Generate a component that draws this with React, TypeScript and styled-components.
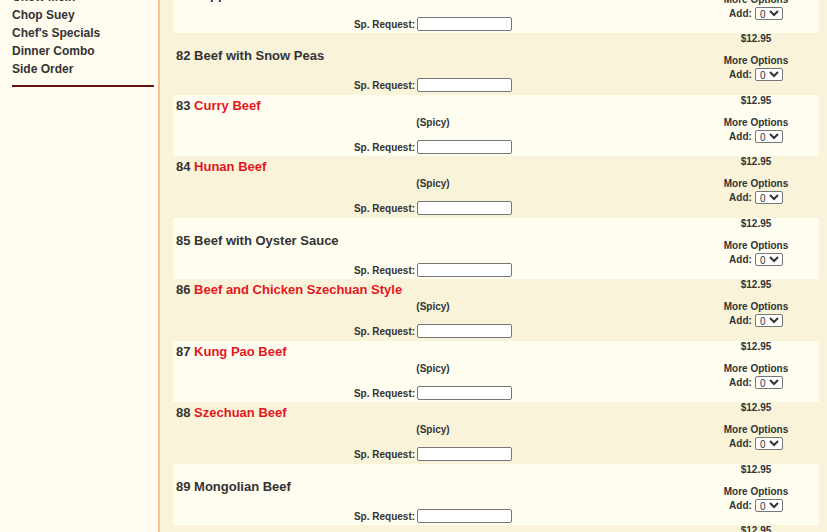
import styled, { createGlobalStyle } from "styled-components";

type Item = { no: number; name: string; spicy?: boolean; price: string };

const sideLinks = ["Chow Mein", "Chop Suey", "Chef's Specials", "Dinner Combo", "Side Order"];

const items: Item[] = [
  { no: 81, name: "Pepper Steak", price: "$12.95" },
  { no: 82, name: "Beef with Snow Peas", price: "$12.95" },
  { no: 83, name: "Curry Beef", spicy: true, price: "$12.95" },
  { no: 84, name: "Hunan Beef", spicy: true, price: "$12.95" },
  { no: 85, name: "Beef with Oyster Sauce", price: "$12.95" },
  { no: 86, name: "Beef and Chicken Szechuan Style", spicy: true, price: "$12.95" },
  { no: 87, name: "Kung Pao Beef", spicy: true, price: "$12.95" },
  { no: 88, name: "Szechuan Beef", spicy: true, price: "$12.95" },
  { no: 89, name: "Mongolian Beef", price: "$12.95" },
  { no: 90, name: "Beef with Broccoli", price: "$12.95" },
];

const GlobalStyle = createGlobalStyle`
  html, body {
    margin: 0;
    padding: 0;
    overflow: hidden;
    background: #f9f3da;
  }
  body {
    font-family: "Liberation Sans", Arial, sans-serif;
    color: #333;
  }
`;

export default function App() {
  return (
    <>
      <GlobalStyle />
      <Layout>
        <Sidebar>
          {sideLinks.map((l) => (
            <SideLink key={l}>{l}</SideLink>
          ))}
          <Separator />
        </Sidebar>
        <Content>
          {items.map((item, i) => (
            <MenuRow key={item.no} $light={i % 2 === 0}>
              <TitleCell $hasDesc={!!item.spicy}>
                <Title>
                  {item.no} <Name $spicy={!!item.spicy}>{item.name}</Name>
                </Title>
                {item.spicy && <Desc>(Spicy)</Desc>}
              </TitleCell>
              <PriceCell>
                <span>{item.price}</span>
                <MoreOptions>More Options</MoreOptions>
                <AddRow>
                  Add:
                  <QtySelect defaultValue="0">
                    <option>0</option>
                    <option>1</option>
                    <option>2</option>
                    <option>3</option>
                  </QtySelect>
                </AddRow>
              </PriceCell>
              <RequestCell>
                <RequestLabel>Sp. Request:</RequestLabel>
                <RequestInput type="text" />
              </RequestCell>
            </MenuRow>
          ))}
        </Content>
      </Layout>
    </>
  );
}

const Layout = styled.div`
  display: grid;
  grid-template-columns: 160px 1fr;
  min-height: calc(100vh + 29px);
  margin-top: -28.5px;
`;

const Sidebar = styled.nav`
  box-sizing: border-box;
  background: #fffcef;
  border-right: 2px solid #f6c495;
  padding: 16.5px 4px 0 12px;
`;

const SideLink = styled.div`
  font-size: 12px;
  font-weight: bold;
  line-height: 18px;
  color: #333;
`;

const Separator = styled.hr`
  margin: 7px 0 0;
  border: 0;
  height: 2px;
  background: #6b1111;
`;

const Content = styled.main`
  padding: 0 8px 0 13px;
`;

const MenuRow = styled.div<{ $light: boolean }>`
  display: grid;
  grid-template-columns: 520px 1fr;
  grid-template-rows: 45px 1fr;
  height: 61.5px;
  background: ${(p) => (p.$light ? "#fffdf0" : "transparent")};
`;

const TitleCell = styled.div<{ $hasDesc: boolean }>`
  grid-column: 1;
  grid-row: 1;
  display: flex;
  flex-direction: column;
  justify-content: ${(p) => (p.$hasDesc ? "flex-start" : "center")};
  padding: ${(p) => (p.$hasDesc ? "3px 3px 0" : "1px 3px 0")};
`;

const Title = styled.div`
  font-size: 13px;
  font-weight: bold;
  line-height: 16px;
`;

const Name = styled.span<{ $spicy: boolean }>`
  color: ${(p) => (p.$spicy ? "#e3171c" : "#333")};
`;

const Desc = styled.div`
  margin-top: 3px;
  font-size: 10px;
  font-weight: bold;
  line-height: 12px;
  text-align: center;
`;

const PriceCell = styled.div`
  grid-column: 2;
  grid-row: 1 / 3;
  display: flex;
  flex-direction: column;
  align-items: center;
  font-size: 10px;
  font-weight: bold;
  line-height: 11px;
`;

const MoreOptions = styled.span`
  margin-top: 11px;
`;

const AddRow = styled.div`
  display: flex;
  align-items: center;
  gap: 3px;
  height: 15px;
  margin-top: 1px;
`;

const QtySelect = styled.select`
  box-sizing: border-box;
  width: 28px;
  height: 13px;
  padding: 0;
  font-family: "Liberation Sans", Arial, sans-serif;
  font-size: 10px;
  color: #333;
  background: #fff;
  border: 1px solid #767676;
  border-radius: 2px;
`;

const RequestCell = styled.div`
  grid-column: 1;
  grid-row: 2;
  display: flex;
  justify-content: center;
  align-items: flex-start;
  gap: 2px;
  font-size: 10px;
  font-weight: bold;
  line-height: 14px;
`;

const RequestLabel = styled.label`
  padding-top: 1px;
`;

const RequestInput = styled.input`
  box-sizing: border-box;
  width: 95px;
  height: 14px;
  padding: 0 2px;
  border: 1px solid #767676;
  border-radius: 2px;
  background: #fff;
`;
